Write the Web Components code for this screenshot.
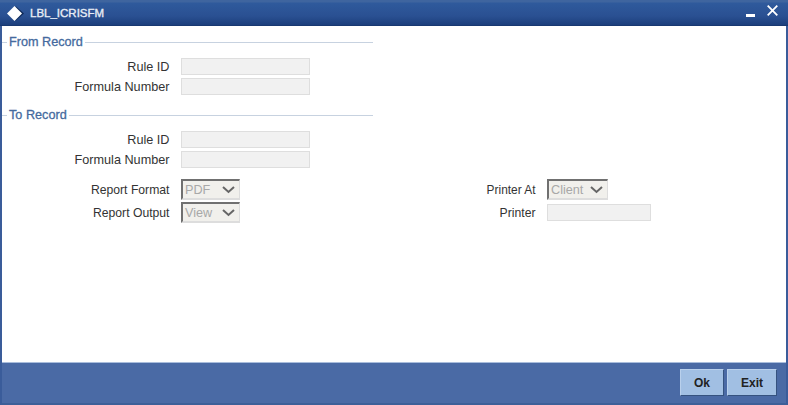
<!DOCTYPE html>
<html><head><meta charset="utf-8"><style>
html,body{margin:0;padding:0;background:#fff}
body{font:12.67px "Liberation Sans",Arial,sans-serif;color:#333;width:788px;height:405px;overflow:hidden}
</style></head><body>
<app-window heading="LBL_ICRISFM">
  <field-set legend="From Record">
    <form-row label="Rule ID"><text-box></text-box></form-row>
    <form-row label="Formula Number"><text-box></text-box></form-row>
  </field-set>
  <field-set legend="To Record">
    <form-row label="Rule ID"><text-box></text-box></form-row>
    <form-row label="Formula Number"><text-box></text-box></form-row>
  </field-set>
  <report-options></report-options>
  <action-button slot="actions" style="--w:44px">Ok</action-button>
  <action-button slot="actions" style="--w:50px">Exit</action-button>
</app-window>
<script>
function def(name, css, html, extra){
  customElements.define(name, class extends HTMLElement{
    constructor(){super();const r=this.attachShadow({mode:'open'});r.innerHTML='<style>'+css+'</style>'+html;}
    connectedCallback(){ if(extra) extra(this); }
  });
}
def('app-window',`
:host{display:flex;flex-direction:column;width:788px;height:405px;box-sizing:border-box;background:#4a6aa5;border-left:2px solid #3a5c9a;border-right:2px solid #3a5c9a;border-bottom:2px solid #3d5f98}
.bar{height:26px;margin:0 -2px;flex:none;display:flex;align-items:center;background:linear-gradient(#3f659f 0,#3f659f 2px,#2f5a9c 3px,#2a5092 16px,#1c3f7c 25px,#143266 26px);color:#fff;font:11.5px "Liberation Sans",Arial,sans-serif;padding-left:7px;box-sizing:border-box}
.bar .t{margin-left:6px;color:#e8edf5;-webkit-text-stroke:.35px #e8edf5}
.bar .sp{flex:1}
.bar svg{display:block}
.main{flex:1;background:#fff;min-height:0}
.foot{height:41px;flex:none;border-top:1px solid #a9bddc;display:flex;justify-content:flex-end;align-items:flex-start;gap:3px;padding:6px 9px 0 0;box-sizing:border-box;background:#4a6aa5}
`,`<div class="bar"><svg width="17" height="15" viewBox="0 0 17 15"><path d="M8.5 0 17 7.5 8.5 15Z" fill="#0e2a58"/><path d="M7.5 0 15 7.5 7.5 15 0 7.5Z" fill="#fff"/></svg><span class="t"></span><span class="sp"></span>
<svg width="9" height="3" viewBox="0 0 9 3" style="margin-top:4px"><rect width="9" height="3" fill="#fff"/></svg>
<svg width="11" height="11" viewBox="0 0 11 11" style="margin:-5px 10px 0 12px"><path d="M.7.7 10.3 10.3M10.3.7 .7 10.3" stroke="#fff" stroke-width="1.8" fill="none"/></svg></div>
<div class="main"><slot></slot></div><div class="foot"><slot name="actions"></slot></div>`,
 el=>{el.shadowRoot.querySelector('.t').textContent=el.getAttribute('heading')});
def('field-set',`
:host{display:block;width:371px;padding-bottom:4px}
.h{display:flex;align-items:center;height:14px;padding-top:9px;color:#456a9e;font:12.67px "Liberation Sans",Arial,sans-serif;-webkit-text-stroke:.3px #456a9e}
.h i{display:block;height:1px;background:#c7d2e0}
.h i:first-child{width:5px}
.h i:last-child{flex:1}
.h span{padding:0 2px 0 2px}
.b{display:flex;flex-direction:column;gap:3px;padding-top:9px}
`,`<div class="h"><i></i><span></span><i></i></div><div class="b"><slot></slot></div>`,
 el=>{el.shadowRoot.querySelector('span').textContent=el.getAttribute('legend')});
def('form-row',`
:host{display:flex;align-items:center;height:17px}
label{width:167.5px;text-align:right;margin-right:11.5px;color:#333;white-space:nowrap;flex:none}
`,`<label></label><slot></slot>`,el=>{el.shadowRoot.querySelector('label').textContent=el.getAttribute('label')});
def('text-box',`
:host{display:block;width:var(--w,129px);height:17px;box-sizing:border-box;background:#f1f1f1;border:1px solid #dedede}
`,``);
def('select-box',`
:host{display:flex;align-items:center;justify-content:space-between;width:var(--w,59px);height:21px;box-sizing:border-box;background:#f1f0ec;border-top:2px solid #707070;border-left:2px solid #707070;border-right:1px solid #ddd;border-bottom:2px solid #ddd;color:#a8a8a8;font:12.67px "Liberation Sans",Arial,sans-serif;padding:0 3px 0 2px}
span{padding-top:1px}
svg{display:block;margin-right:1px}
`,`<span><slot></slot></span><svg width="13" height="8" viewBox="0 0 13 8"><path d="M1 1 6.5 6 12 1" fill="none" stroke="#666" stroke-width="2"/></svg>`);
def('report-options',`
:host{display:grid;grid-template-columns:168px 70px 296px auto;column-gap:0;align-items:center;row-gap:2px;padding-top:7px}
.l{text-align:right;white-space:nowrap;font-size:12.2px;padding-right:.5px}
.p{font-size:11.9px}
.c1,.c2{margin-left:11px}
`,`<div class="l">Report Format</div><select-box class="c1">PDF</select-box><div class="l p">Printer At</div><select-box class="c2" style="--w:61px">Client</select-box>
<div class="l">Report Output</div><select-box class="c1">View</select-box><div class="l">Printer</div><text-box class="c2" style="--w:104px"></text-box>`);
def('action-button',`
:host{display:flex;align-items:center;justify-content:center;width:var(--w,44px);height:27px;box-sizing:border-box;background:#a1bfe3;border:1px solid #b9d0ec;border-right-color:#35527f;border-bottom-color:#35527f;color:#222;font:bold 12px "Liberation Sans",Arial,sans-serif}
`,`<slot></slot>`);
</script></body></html>
